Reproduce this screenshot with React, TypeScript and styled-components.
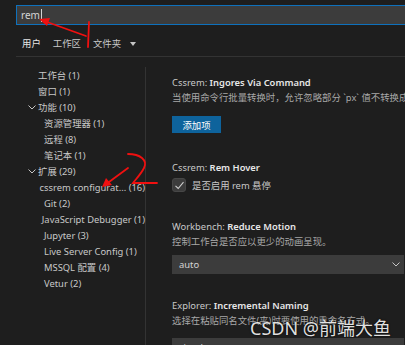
import React from "react";
import styled, { createGlobalStyle } from "styled-components";

const GlobalStyle = createGlobalStyle`
  body {
    margin: 0;
    background: #1e1e1e;
    overflow: hidden;
    font-family: "Noto Sans", "Noto Sans CJK SC", sans-serif;
  }
`;

const Page = styled.div`
  position: relative;
  width: 405px;
  height: 345px;
  overflow: hidden;
  background: #1e1e1e;
  color: #cccccc;
  font-size: 9.4px;
`;

const SearchBox = styled.div`
  display: flex;
  align-items: center;
  box-sizing: border-box;
  margin: 5px 0 0 16px;
  width: 400px;
  height: 20px;
  padding-left: 4px;
  background: #3c3c3c;
  border: 1px solid #0e71bd;
  font-size: 10px;
  color: #d4d4d4;
`;

const Caret = styled.span`
  display: inline-block;
  width: 1px;
  height: 13px;
  margin-left: 1px;
  background: #d4d4d4;
`;

const Tabs = styled.div`
  display: flex;
  align-items: center;
  gap: 12px;
  box-sizing: border-box;
  height: 32px;
  margin-left: 16px;
  padding: 6px 0 0 6px;
  border-bottom: 1px solid #333333;
`;

const Tab = styled.span<{ $active?: boolean }>`
  font-size: 9.4px;
  line-height: 14px;
  color: ${(p) => (p.$active ? "#e7e7e7" : "#c8c8c8")};
`;

const TabCaret = styled.span`
  margin-left: -3px;
  width: 0;
  height: 0;
  border-left: 3px solid transparent;
  border-right: 3px solid transparent;
  border-top: 4px solid #c5c5c5;
`;

const Body = styled.div`
  display: grid;
  grid-template-columns: 146px 1fr;
  margin-top: 10px;
  height: 280px;
`;

const Sidebar = styled.div`
  border-right: 1px solid #333333;
`;

const TreeRow = styled.div<{ $indent: number }>`
  display: flex;
  align-items: center;
  height: 16px;
  padding-left: ${(p) => p.$indent}px;
  white-space: nowrap;
  color: #c8c8c8;
`;

const Twistie = styled.span`
  display: flex;
  align-items: center;
  justify-content: center;
  width: 12px;
  svg {
    width: 8px;
    height: 5px;
  }
`;

const Content = styled.div`
  padding: 8px 0 0 26px;
`;

const Setting = styled.div<{ $gap: number }>`
  margin-bottom: ${(p) => p.$gap}px;
`;

const Title = styled.div`
  line-height: 15px;
  font-size: 9.4px;
  color: #c8c8c8;
  white-space: nowrap;
  b {
    font-weight: 600;
    color: #e7e7e7;
  }
`;

const Desc = styled.div`
  line-height: 16px;
  color: #a8a8a8;
  white-space: nowrap;
`;

const Button = styled.div`
  display: flex;
  align-items: center;
  justify-content: center;
  width: 49px;
  height: 17px;
  margin-top: 10px;
  background: #0e639c;
  color: #ffffff;
`;

const CheckRow = styled.div`
  display: flex;
  align-items: center;
  gap: 6px;
  margin-top: 3px;
  color: #c8c8c8;
`;

const CheckBox = styled.span`
  display: flex;
  align-items: center;
  justify-content: center;
  box-sizing: border-box;
  width: 14px;
  height: 14px;
  border-radius: 3px;
  background: #3c3c3c;
  border: 1px solid #474747;
  svg {
    width: 11px;
    height: 11px;
  }
`;

const Select = styled.div<{ $top: number }>`
  display: flex;
  align-items: center;
  justify-content: space-between;
  box-sizing: border-box;
  width: 232px;
  height: 19px;
  margin-top: ${(p) => p.$top}px;
  padding: 0 4px 0 7px;
  background: #3c3c3c;
  color: #d4d4d4;
  svg {
    width: 8px;
    height: 5px;
  }
`;

const Watermark = styled.div`
  position: absolute;
  left: 250px;
  top: 316px;
  font-size: 18px;
  line-height: 24px;
  color: rgba(255, 255, 255, 0.88);
  text-shadow: 0 0 2px rgba(0, 0, 0, 0.9);
  white-space: nowrap;
`;

const Marks = styled.svg`
  position: absolute;
  left: 0;
  top: 0;
  pointer-events: none;
`;

const Chevron = ({ color = "#c5c5c5" }: { color?: string }) => (
  <svg viewBox="0 0 8 5">
    <path d="M0.5 0.5 L4 4 L7.5 0.5" fill="none" stroke={color} strokeWidth="1" />
  </svg>
);

type TreeItem = { label: string; indent: number; open?: boolean };

const tree: TreeItem[] = [
  { label: "工作台 (1)", indent: 26 },
  { label: "窗口 (1)", indent: 26 },
  { label: "功能 (10)", indent: 26, open: true },
  { label: "资源管理器 (1)", indent: 32 },
  { label: "远程 (8)", indent: 32 },
  { label: "笔记本 (1)", indent: 32 },
  { label: "扩展 (29)", indent: 26, open: true },
  { label: "cssrem configurat... (16)", indent: 32 },
  { label: "Git (2)", indent: 32 },
  { label: "JavaScript Debugger (1)", indent: 32 },
  { label: "Jupyter (3)", indent: 32 },
  { label: "Live Server Config (1)", indent: 32 },
  { label: "MSSQL 配置 (4)", indent: 32 },
  { label: "Vetur (2)", indent: 32 },
];

export default function App() {
  return (
    <>
      <GlobalStyle />
      <Page>
        <SearchBox>
          rem
          <Caret />
        </SearchBox>
        <Tabs>
          <Tab $active>用户</Tab>
          <Tab>工作区</Tab>
          <Tab>文件夹</Tab>
          <TabCaret />
        </Tabs>
        <Body>
          <Sidebar>
            {tree.map((item) => (
              <TreeRow key={item.label} $indent={item.indent}>
                <Twistie>{item.open && <Chevron />}</Twistie>
                {item.label}
              </TreeRow>
            ))}
          </Sidebar>
          <Content>
            <Setting $gap={27}>
              <Title>
                Cssrem: <b>Ingores Via Command</b>
              </Title>
              <Desc>当使用命令行批量转换时，允许忽略部分 `px` 值不转换成 rem</Desc>
              <Button>添加项</Button>
            </Setting>
            <Setting $gap={27}>
              <Title>
                Cssrem: <b>Rem Hover</b>
              </Title>
              <CheckRow>
                <CheckBox>
                  <svg viewBox="0 0 11 11">
                    <path d="M1.5 5.8 L4.2 8.5 L9.5 2.2" fill="none" stroke="#d0d0d0" strokeWidth="1.1" />
                  </svg>
                </CheckBox>
                是否启用 rem 悬停
              </CheckRow>
            </Setting>
            <Setting $gap={24}>
              <Title>
                Workbench: <b>Reduce Motion</b>
              </Title>
              <Desc>控制工作台是否应以更少的动画呈现。</Desc>
              <Select $top={5}>
                auto
                <Chevron />
              </Select>
            </Setting>
            <Setting $gap={0}>
              <Title>
                Explorer: <b>Incremental Naming</b>
              </Title>
              <Desc>选择在粘贴同名文件(夹)时要使用的重命名方式。</Desc>
              <Select $top={9}>
                simple
                <Chevron />
              </Select>
            </Setting>
          </Content>
        </Body>
        <Watermark>CSDN @前端大鱼</Watermark>
        <Marks width="405" height="345" viewBox="0 0 405 345">
          <g stroke="#f01010" fill="none" strokeWidth="1.8" strokeLinecap="round">
            <path d="M86 36 L47 22" />
            <path d="M89 22 L88 47" />
            <path d="M128 154 C140 154 148 160 144 168 C141 174 136 179 133 183 L157 183" />
            <path d="M128 168 L109 182" />
          </g>
          <g fill="#f01010">
            <path d="M39 19 L50 18 L47 26 Z" />
            <path d="M102 187 L106 178 L112 185 Z" />
          </g>
        </Marks>
      </Page>
    </>
  );
}
